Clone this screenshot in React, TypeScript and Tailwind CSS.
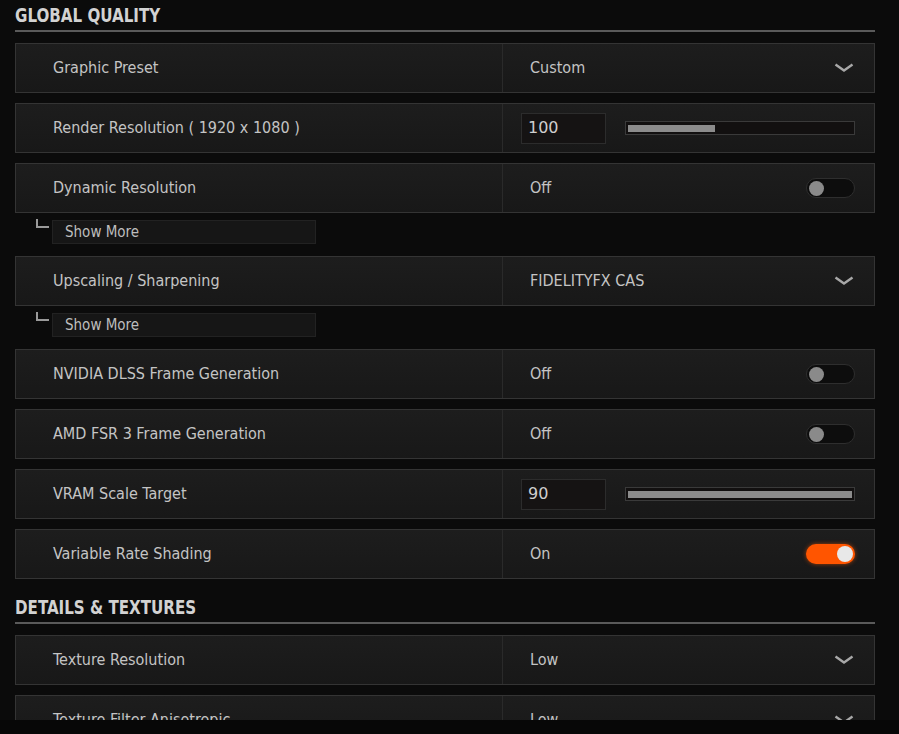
import React from 'react';

const FONT = { fontFamily: '"Liberation Sans Narrow", "DejaVu Sans Condensed", "Roboto", sans-serif' };

type Control =
  | { kind: 'select'; value: string }
  | { kind: 'toggle'; value: boolean }
  | { kind: 'slider'; value: number; fill: number };

interface Setting {
  label: string;
  control: Control;
  showMore?: boolean;
}

const globalQuality: Setting[] = [
  { label: 'Graphic Preset', control: { kind: 'select', value: 'Custom' } },
  { label: 'Render Resolution ( 1920 x 1080 )', control: { kind: 'slider', value: 100, fill: 39 } },
  { label: 'Dynamic Resolution', control: { kind: 'toggle', value: false }, showMore: true },
  { label: 'Upscaling / Sharpening', control: { kind: 'select', value: 'FIDELITYFX CAS' }, showMore: true },
  { label: 'NVIDIA DLSS Frame Generation', control: { kind: 'toggle', value: false } },
  { label: 'AMD FSR 3 Frame Generation', control: { kind: 'toggle', value: false } },
  { label: 'VRAM Scale Target', control: { kind: 'slider', value: 90, fill: 100 } },
  { label: 'Variable Rate Shading', control: { kind: 'toggle', value: true } },
];

const details: Setting[] = [
  { label: 'Texture Resolution', control: { kind: 'select', value: 'Low' } },
  { label: 'Texture Filter Anisotropic', control: { kind: 'select', value: 'Low' } },
];

const Chevron = () => (
  <svg width="20" height="10" viewBox="0 0 20 10" className="mr-[20px]">
    <path d="M1.5 1.5 L10 7.5 L18.5 1.5" fill="none" stroke="#a8a8a8" strokeWidth="2.4" />
  </svg>
);

const Toggle = ({ on }: { on: boolean }) =>
  on ? (
    <div className="mr-[19px] flex h-[20px] w-[49px] items-center justify-end rounded-full bg-[#ff5500] pr-[2px] shadow-[0_0_4px_rgba(255,90,0,0.6)]">
      <div className="h-[16px] w-[16px] rounded-full bg-[#e8e8e8]" />
    </div>
  ) : (
    <div className="mr-[19px] flex h-[20px] w-[49px] items-center rounded-full border border-[#2e2e2e] bg-[#0d0d0d] pl-[2px]">
      <div className="h-[15px] w-[15px] rounded-full bg-[#8a8a8a]" />
    </div>
  );

const Slider = ({ value, fill }: { value: number; fill: number }) => (
  <div className="flex flex-1 items-center">
    <div className="ml-[-9px] flex h-[31px] w-[85px] items-center border border-[#2c2c2c] bg-[#151313] pl-[6px] text-[16px] text-[#cfcfcf]" style={{ fontFamily: '"DejaVu Sans", sans-serif' }}>
      {value}
    </div>
    <div className="ml-[19px] mr-[19px] flex h-[14px] flex-1 items-center border border-[#3a3a3a] bg-[#121010] px-[2px]">
      <div className="h-[7px] bg-[#8c8c8c]" style={{ width: `${fill}%` }} />
    </div>
  </div>
);

const Row = ({ s }: { s: Setting }) => (
  <div className="flex h-[50px] border border-[#343434] bg-gradient-to-b from-[#1d1d1d] to-[#181818]">
    <div className="flex w-[487px] items-center border-r border-[#2a2a2a] pl-[37px] text-[16px] text-[#c4c4c4]">
      {s.label}
    </div>
    <div className="flex flex-1 items-center pl-[27px] text-[16px] text-[#c4c4c4]">
      {s.control.kind === 'select' && (
        <>
          <span className="flex-1">{s.control.value}</span>
          <Chevron />
        </>
      )}
      {s.control.kind === 'toggle' && (
        <>
          <span className="flex-1">{s.control.value ? 'On' : 'Off'}</span>
          <Toggle on={s.control.value} />
        </>
      )}
      {s.control.kind === 'slider' && <Slider value={s.control.value} fill={s.control.fill} />}
    </div>
  </div>
);

const ShowMore = () => (
  <div className="mb-[2px] mt-[7px] flex items-start">
    <div className="ml-[21px] mt-[-1px] h-[9px] w-[13px] border-b-2 border-l-2 border-[#9a9a9a]" />
    <div className="ml-[3px] flex h-[24px] w-[264px] items-center border border-[#222] bg-[#161616] pl-[12px] text-[15px] text-[#bdbdbd]">
      Show More
    </div>
  </div>
);

const Section = ({ title, items }: { title: string; items: Setting[] }) => (
  <div>
    <div className="border-b-2 border-[#5a5a5a] pb-[3px] text-[20px] font-bold leading-[24px] text-[#d2d2d2]">
      <span className="inline-block origin-left scale-x-[0.84]">{title}</span>
    </div>
    <div className="mt-[11px] flex flex-col">
      {items.map((s) => (
        <div key={s.label} className="mb-[10px]">
          <Row s={s} />
          {s.showMore && <ShowMore />}
        </div>
      ))}
    </div>
  </div>
);

export default function App() {
  return (
    <div className="h-[734px] w-[899px] overflow-hidden bg-[#070707]" style={FONT}>
      <div className="h-[720px] overflow-hidden bg-[#0b0b0b] pl-[15px] pr-[24px] pt-[3px]">
        <Section title="GLOBAL QUALITY" items={globalQuality} />
        <div className="mt-[6px]">
          <Section title="DETAILS & TEXTURES" items={details} />
        </div>
      </div>
    </div>
  );
}
